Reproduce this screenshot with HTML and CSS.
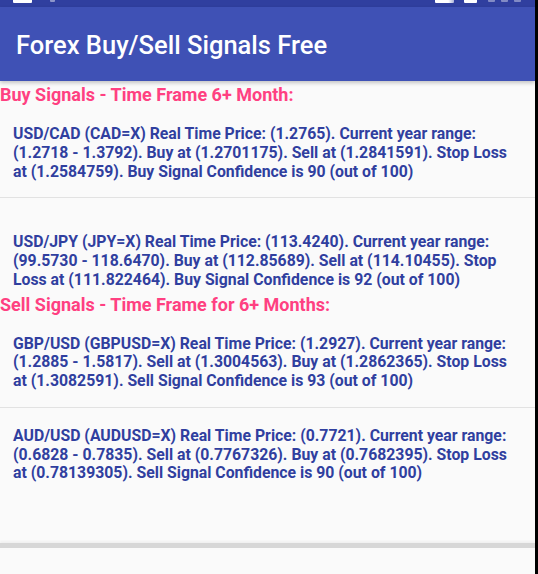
FILE: index.html
```html
<!DOCTYPE html>
<html lang="en">
<head>
<meta charset="utf-8">
<title>Forex Buy/Sell Signals Free</title>
<link rel="stylesheet" href="styles.css">
</head>
<body>
<div class="device">
  <div class="screen">
    <div class="statusbar">
      <div class="sb-group sb-left">
        <span class="sb-icon sb-notif"></span>
        <span class="sb-icon sb-faint"></span>
      </div>
      <div class="sb-group sb-right">
        <span class="sb-icon sb-signal"></span>
        <span class="sb-icon sb-battery"></span>
        <span class="sb-icon sb-digit"></span>
        <span class="sb-icon sb-digit"></span>
        <span class="sb-icon sb-digit"></span>
      </div>
    </div>
    <header class="appbar">
      <h1 class="title">Forex Buy/Sell Signals Free</h1>
    </header>
    <main class="list">
      <h2 class="section">Buy Signals - Time Frame 6+ Month:</h2>
      <p class="signal signal--divided">USD/CAD (CAD=X) Real Time Price: (1.2765). Current year range:<br>(1.2718 - 1.3792). Buy at (1.2701175). Sell at (1.2841591). Stop Loss<br>at (1.2584759). Buy Signal Confidence is 90 (out of 100)</p>
      <p class="signal signal--low">USD/JPY (JPY=X) Real Time Price: (113.4240). Current year range:<br>(99.5730 - 118.6470). Buy at (112.85689). Sell at (114.10455). Stop<br>Loss at (111.822464). Buy Signal Confidence is 92 (out of 100)</p>
      <h2 class="section">Sell Signals - Time Frame for 6+ Months:</h2>
      <p class="signal signal--divided">GBP/USD (GBPUSD=X) Real Time Price: (1.2927). Current year range:<br>(1.2885 - 1.5817). Sell at (1.3004563). Buy at (1.2862365). Stop Loss<br>at (1.3082591). Sell Signal Confidence is 93 (out of 100)</p>
      <p class="signal signal--last">AUD/USD (AUDUSD=X) Real Time Price: (0.7721). Current year range:<br>(0.6828 - 0.7835). Sell at (0.7767326). Buy at (0.7682395). Stop Loss<br>at (0.78139305). Sell Signal Confidence is 90 (out of 100)</p>
    </main>
    <footer class="adbar"></footer>
  </div>
  <div class="bezel"></div>
</div>
</body>
</html>
```
FILE: styles.css
```css
* {
  box-sizing: border-box;
}

html, body {
  margin: 0;
  padding: 0;
  background: #000;
}

body {
  width: 538px;
  height: 574px;
  overflow: hidden;
  font-family: "Roboto", "Noto Sans", "Liberation Sans", sans-serif;
}

.device {
  display: flex;
  width: 538px;
  height: 574px;
}

.screen {
  flex: 1;
  display: flex;
  flex-direction: column;
  background: #fafafa;
  min-width: 0;
}

.bezel {
  width: 3px;
  background: #000;
}

/* status bar (mostly cropped away) */
.statusbar {
  height: 7px;
  background: #303f9f;
  display: flex;
  justify-content: space-between;
  align-items: flex-start;
  padding: 0 14px 0 13px;
}

.sb-group {
  display: flex;
  align-items: flex-start;
}

.sb-icon {
  display: block;
  height: 3px;
  background: #ffffff;
  border-radius: 0 0 1px 1px;
}

.sb-notif {
  width: 19px;
}

.sb-faint {
  width: 5px;
  height: 2px;
  margin-left: 18px;
  background: rgba(255, 255, 255, 0.45);
}

.sb-signal {
  width: 19px;
  background: linear-gradient(90deg, #ffffff 70%, rgba(255, 255, 255, 0.6));
}

.sb-battery {
  width: 13px;
  margin-left: 10px;
}

.sb-digit {
  width: 7px;
  height: 2px;
  margin-left: 6px;
  background: rgba(255, 255, 255, 0.4);
}

.sb-battery + .sb-digit {
  margin-left: 11px;
}

/* app bar */
.appbar {
  height: 74px;
  background: #3f51b5;
  padding: 23px 0 0 16px;
  box-shadow: 0 2px 4px rgba(0, 0, 0, 0.22);
  position: relative;
  z-index: 1;
}

.title {
  margin: 0;
  color: #ffffff;
  font-size: 25.5px;
  line-height: 30px;
  font-weight: 500;
}

/* list */
.list {
  flex: 1;
}

.section {
  margin: 3px 0 0 0;
  padding: 0;
  color: #ff4081;
  font-size: 18px;
  line-height: 21px;
  font-weight: 700;
}

.signal {
  margin: 0;
  padding: 20px 8px 16px 13px;
  color: #303f9f;
  font-size: 15.8px;
  line-height: 18.75px;
  font-weight: 700;
  white-space: nowrap;
}

.signal--divided {
  border-bottom: 1px solid #e2e2e2;
}

.signal--low {
  padding-top: 35px;
  padding-bottom: 1px;
}

.signal--last {
  padding-top: 19px;
}

.adbar {
  height: 31px;
  border-top: 5px solid #d7d7d7;
  box-shadow: 0 -2px 2px rgba(0, 0, 0, 0.04);
  background: #fafafa;
}
```
